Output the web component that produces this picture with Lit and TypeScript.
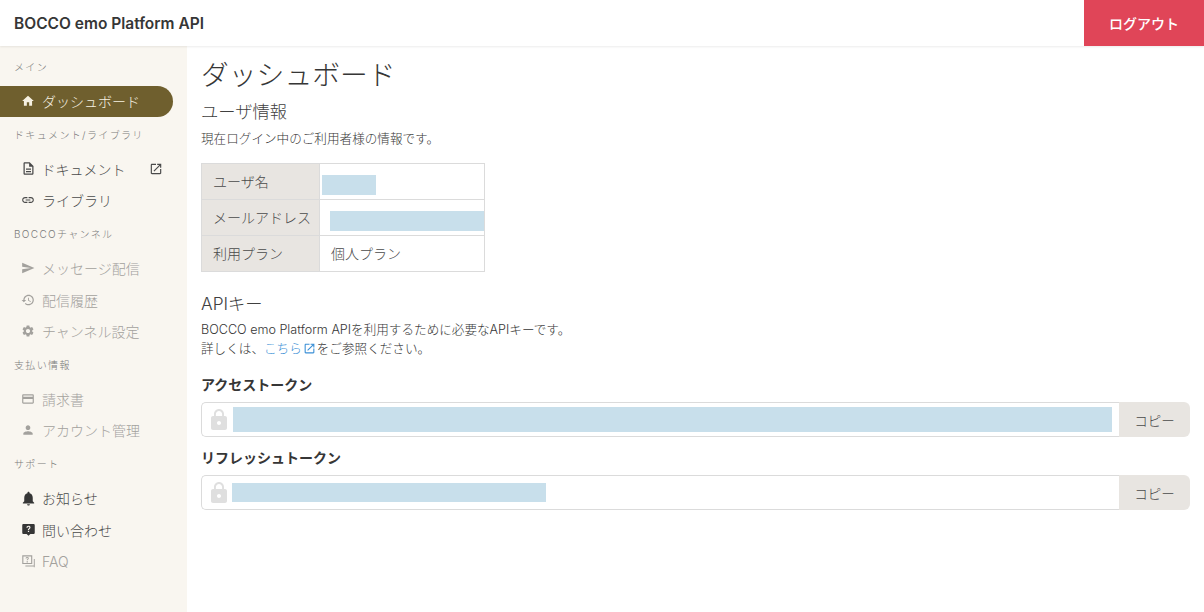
import { LitElement, html, css, svg } from "lit";
import { customElement } from "lit/decorators.js";

const I: Record<string, string> = {
  home: "M10 20v-6h4v6h5v-8h3L12 3 2 12h3v8z",
  doc: "M8 16h8v2H8zm0-4h8v2H8zm6-10H6c-1.1 0-2 .9-2 2v16c0 1.1.89 2 1.99 2H18c1.1 0 2-.9 2-2V8l-6-6zm4 18H6V4h7v5h5v11z",
  open: "M19 19H5V5h7V3H5c-1.11 0-2 .9-2 2v14c0 1.1.89 2 2 2h14c1.1 0 2-.9 2-2v-7h-2v7zM14 3v2h3.59l-9.83 9.83 1.41 1.41L19 6.41V10h2V3h-7z",
  link: "M3.9 12c0-1.71 1.39-3.1 3.1-3.1h4V7H7c-2.76 0-5 2.24-5 5s2.24 5 5 5h4v-1.9H7c-1.71 0-3.1-1.39-3.1-3.1zM8 13h8v-2H8v2zm9-6h-4v1.9h4c1.71 0 3.1 1.39 3.1 3.1s-1.39 3.1-3.1 3.1h-4V17h4c2.76 0 5-2.24 5-5s-2.24-5-5-5z",
  send: "M2.01 21L23 12 2.01 3 2 10l15 2-15 2z",
  history: "M13 3c-4.97 0-9 4.03-9 9H1l3.89 3.89.07.14L9 12H6c0-3.87 3.13-7 7-7s7 3.13 7 7-3.13 7-7 7c-1.93 0-3.68-.79-4.94-2.06l-1.42 1.42C8.27 19.99 10.51 21 13 21c4.97 0 9-4.03 9-9s-4.03-9-9-9zm-1 5v5l4.28 2.54.72-1.21-3.5-2.08V8H12z",
  gear: "M19.14 12.94c.04-.3.06-.61.06-.94 0-.32-.02-.64-.07-.94l2.03-1.58c.18-.14.23-.41.12-.61l-1.92-3.32c-.12-.22-.37-.29-.59-.22l-2.39.96c-.5-.38-1.03-.7-1.62-.94l-.36-2.54c-.04-.24-.24-.41-.48-.41h-3.84c-.24 0-.43.17-.47.41l-.36 2.54c-.59.24-1.13.57-1.62.94l-2.39-.96c-.22-.08-.47 0-.59.22L2.74 8.87c-.12.21-.08.47.12.61l2.03 1.58c-.05.3-.09.63-.09.94s.02.64.07.94l-2.03 1.58c-.18.14-.23.41-.12.61l1.92 3.32c.12.22.37.29.59.22l2.39-.96c.5.38 1.03.7 1.62.94l.36 2.54c.05.24.24.41.48.41h3.84c.24 0 .44-.17.47-.41l.36-2.54c.59-.24 1.13-.56 1.62-.94l2.39.96c.22.08.47 0 .59-.22l1.92-3.32c.12-.22.07-.47-.12-.61l-2.01-1.58zM12 15.6c-1.98 0-3.6-1.62-3.6-3.6s1.62-3.6 3.6-3.6 3.6 1.62 3.6 3.6-1.62 3.6-3.6 3.6z",
  card: "M20 4H4c-1.11 0-1.99.89-1.99 2L2 18c0 1.11.89 2 2 2h16c1.11 0 2-.89 2-2V6c0-1.11-.89-2-2-2zm0 14H4v-6h16v6zm0-10H4V6h16v2z",
  person: "M12 12c2.21 0 4-1.79 4-4s-1.79-4-4-4-4 1.79-4 4 1.79 4 4 4zm0 2c-2.67 0-8 1.34-8 4v2h16v-2c0-2.66-5.33-4-8-4z",
  bell: "M12 22c1.1 0 2-.9 2-2h-4c0 1.1.89 2 2 2zm6-6v-5c0-3.07-1.64-5.64-4.5-6.32V4c0-.83-.67-1.5-1.5-1.5s-1.5.67-1.5 1.5v.68C7.63 5.36 6 7.92 6 11v5l-2 2v1h16v-1l-2-2z",
  ask: "M20 3H4c-1.1 0-2 .9-2 2v12c0 1.1.9 2 2 2h5l3 3 3-3h5c1.1 0 2-.9 2-2V5c0-1.1-.9-2-2-2zM11 14h2v2h-2zM12 6c-1.9 0-3.2 1.2-3.3 3h1.9c.1-.8.6-1.3 1.4-1.3.8 0 1.3.4 1.3 1.1 0 .6-.3.9-1 1.4-.9.6-1.3 1.2-1.3 2.3v.2h1.9v-.2c0-.6.2-.9.9-1.4.9-.6 1.4-1.3 1.4-2.4C15.2 7.1 13.9 6 12 6z",
  faq: "M2 2h16v14H2zM3.800 3.800v10.400h12.400V3.800zM9 11.500h2v2H9zM10 4.600c-1.500 0-2.600.9-2.700 2.400h1.600c.1-.6.5-1 1.100-1 .6 0 1 .3 1 .8s-.3.7-.8 1.100c-.7.5-1 1-1 1.800v.2h1.500v-.2c0-.5.2-.7.7-1.100.7-.5 1.100-1 1.100-1.900 0-1.300-1.100-2.100-2.500-2.100zM20.500 8H22v13h-1.500zM7 18.500h13.500V20H7z",
  lock: "M18 8h-1V6c0-2.76-2.24-5-5-5S7 3.24 7 6v2H6c-1.1 0-2 .9-2 2v10c0 1.1.9 2 2 2h12c1.1 0 2-.9 2-2V10c0-1.1-.9-2-2-2zm-6 9c-1.1 0-2-.9-2-2s.9-2 2-2 2 .9 2 2-.9 2-2 2zm3.1-9H8.9V6c0-1.71 1.39-3.1 3.1-3.1 1.71 0 3.1 1.39 3.1 3.1v2z",
};

const icon = (n: string, cls = "") =>
  html`<svg class="ic i-${n} ${cls}" viewBox="0 0 24 24" fill="currentColor" fill-rule="evenodd">${svg`<path d=${I[n]}></path>`}</svg>`;

type Item = { ic: string; t: string; off?: boolean; on?: boolean; ext?: boolean };
const nav: { label: string; items: Item[] }[] = [
  { label: "メイン", items: [{ ic: "home", t: "ダッシュボード", on: true }] },
  { label: "ドキュメント/ライブラリ", items: [{ ic: "doc", t: "ドキュメント", ext: true }, { ic: "link", t: "ライブラリ" }] },
  { label: "BOCCOチャンネル", items: [{ ic: "send", t: "メッセージ配信", off: true }, { ic: "history", t: "配信履歴", off: true }, { ic: "gear", t: "チャンネル設定", off: true }] },
  { label: "支払い情報", items: [{ ic: "card", t: "請求書", off: true }, { ic: "person", t: "アカウント管理", off: true }] },
  { label: "サポート", items: [{ ic: "bell", t: "お知らせ" }, { ic: "ask", t: "問い合わせ" }, { ic: "faq", t: "FAQ", off: true }] },
];

@customElement("app-root")
export class AppRoot extends LitElement {
  static styles = css`
    :host {
      display: flex;
      flex-direction: column;
      height: 612px;
      overflow: hidden;
      background: #fff;
      color: #363636;
      font-family: Inter, "Noto Sans CJK JP", sans-serif;
      font-size: 12.600px;
      font-weight: 300;
    }
    * { box-sizing: border-box; }
    .top {
      height: 46px;
      flex: none;
      display: flex;
      align-items: center;
      justify-content: space-between;
      box-shadow: 0 1px 2px rgba(0, 0, 0, 0.08);
      position: relative;
      z-index: 1;
    }
    .brand { font-size: 15.500px; font-weight: 600; margin-left: 14px; color: #363636; }
    .logout {
      width: 120px;
      height: 46px;
      display: flex;
      align-items: center;
      justify-content: center;
      background: #e04558;
      color: #fff;
      font-size: 14px;
      font-weight: 500;
    }
    .body { flex: 1; display: flex; min-height: 0; }
    .side { width: 187px; flex: none; background: #f9f6f0; padding-top: 13px; }
    .label {
      height: 16px;
      line-height: 16px;
      margin: 10px 0 10px 14px;
      font-size: 10px;
      letter-spacing: 1.350px;
      color: #7a7a7a;
    }
    .group:first-child .label { margin-top: 0; margin-bottom: 10.500px; }
    .item {
      width: 173px;
      height: 31.600px;
      display: flex;
      align-items: center;
      padding-left: 21px;
      font-size: 14px;
      color: #4a4a4a;
      border-radius: 0 16px 16px 0;
    }
    .item .ic { width: 14px; height: 14px; margin-right: 7px; flex: none; }
    .item .i-doc { width: 15px; height: 15px; margin: 0 6px 0 -0.500px; }
    .item .i-bell { width: 17px; height: 17px; margin: 0 5.500px 0 -1.500px; color: #363636; }
    .item .i-ask { width: 15px; height: 15px; margin: 0 6.500px 0 -0.500px; color: #363636; }
    .item .i-faq { width: 15px; height: 15px; margin: 0 6.500px 0 -0.500px; }
    .item .ext { width: 14px; height: 14px; margin: 0 10px 0 auto; }
    .item.off { color: #a3a19d; }
    .item.on { background: #6f5f2e; color: #f6f1e2; }
    main { flex: 1; min-width: 0; padding: 10px 14px 0; }
    h1 { margin: 0; font-size: 27.800px; line-height: 38px; font-weight: 300; }
    h2 { margin: 0; font-size: 17.300px; line-height: 26px; font-weight: 300; color: #404040; }
    .user { margin-top: 5px; }
    p { margin: 0; line-height: 19px; }
    .sub { margin-top: 4px; }
    table {
      margin-top: 15px;
      border-collapse: collapse;
      table-layout: fixed;
      width: 284px;
      height: 109px;
      font-size: 14px;
      color: #4a4a4a;
    }
    th, td { border: 1px solid #dbdbdb; padding: 0 0 2px; height: 36px; font-weight: 300; text-align: left; }
    th { width: 118px; background: #e8e5e1; padding-left: 11px; }
    td { padding-left: 11px; }
    td.flush { padding-left: 0; }
    .mask { display: block; height: 20px; margin-top: 8px; background: #c8dfeb; }
    .m1 { width: 54px; margin-left: 2px; }
    .m2 { width: 155px; margin-left: 10px; }
    .api { margin-top: 19px; }
    .api-text { margin-top: 3px; }
    a { color: #3a8fd6; text-decoration: none; }
    a .ic { width: 13px; height: 13px; vertical-align: -2px; margin: 0 1px; }
    .field-label { font-size: 14px; font-weight: 600; line-height: 20px; margin: 17px 0 7px; color: #363636; }
    .field-label.second { margin-top: 11px; }
    .field { display: flex; height: 35px; }
    .input {
      flex: 1;
      display: flex;
      align-items: center;
      min-width: 0;
      border: 1px solid #dbdbdb;
      border-right: 0;
      border-radius: 5px 0 0 5px;
      padding-left: 5px;
    }
    .input .ic { width: 24px; height: 24px; color: #dfdfdf; flex: none; margin-right: 2px; }
    .tok { height: 25px; background: #c8dfeb; }
    .t1 { width: 879px; }
    .t2 { width: 314px; height: 19px; margin-left: -1px; }
    .copy {
      width: 71px;
      flex: none;
      display: flex;
      align-items: center;
      justify-content: center;
      background: #e8e5e1;
      border-radius: 0 6px 6px 0;
      font-size: 13.500px;
      color: #4a4a4a;
    }
  `;

  render() {
    return html`
      <header class="top">
        <div class="brand">BOCCO emo Platform API</div>
        <div class="logout">ログアウト</div>
      </header>
      <div class="body">
        <aside class="side">
          ${nav.map(
            (g) => html`<div class="group">
              <div class="label">${g.label}</div>
              ${g.items.map(
                (i) => html`<div class="item ${i.off ? "off" : ""} ${i.on ? "on" : ""}">
                  ${icon(i.ic)}<span>${i.t}</span>${i.ext ? icon("open", "ext") : ""}
                </div>`
              )}
            </div>`
          )}
        </aside>
        <main>
          <h1>ダッシュボード</h1>
          <h2 class="user">ユーザ情報</h2>
          <p class="sub">現在ログイン中のご利用者様の情報です。</p>
          <table>
            <tr><th>ユーザ名</th><td class="flush"><span class="mask m1"></span></td></tr>
            <tr><th>メールアドレス</th><td class="flush"><span class="mask m2"></span></td></tr>
            <tr><th>利用プラン</th><td>個人プラン</td></tr>
          </table>
          <h2 class="api">APIキー</h2>
          <p class="api-text">BOCCO emo Platform APIを利用するために必要なAPIキーです。<br />詳しくは、<a>こちら${icon("open")}</a>をご参照ください。</p>
          <div class="field-label">アクセストークン</div>
          <div class="field">
            <div class="input">${icon("lock")}<div class="tok t1"></div></div>
            <div class="copy">コピー</div>
          </div>
          <div class="field-label second">リフレッシュトークン</div>
          <div class="field">
            <div class="input">${icon("lock")}<div class="tok t2"></div></div>
            <div class="copy">コピー</div>
          </div>
        </main>
      </div>
    `;
  }
}
